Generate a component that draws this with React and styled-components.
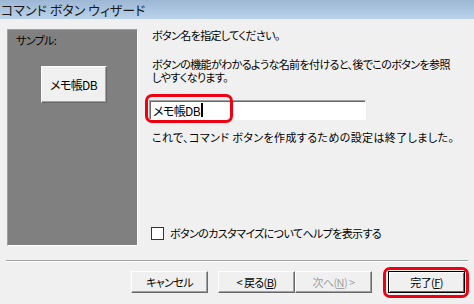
import React from 'react';
import styled, { createGlobalStyle } from 'styled-components';

const GlobalStyle = createGlobalStyle`
  html, body {
    margin: 0;
    padding: 0;
    background: #f0f0f0;
  }
  body {
    font-family: "Noto Sans CJK JP", "Liberation Sans", sans-serif;
    font-size: 11px;
    letter-spacing: -0.6px;
    color: #000;
    font-feature-settings: "palt";
  }
`;

const Window = styled.div`
  width: 474px;
  height: 304px;
  background: #f0f0f0;
  display: flex;
  flex-direction: column;
  overflow: hidden;
`;

const TitleBar = styled.div`
  height: 19px;
  background: linear-gradient(to bottom, #9cb7d5, #bad2ea);
  display: flex;
  align-items: center;
  padding-left: 1px;
  font-size: 13px;
  letter-spacing: 0;
  color: #1a1a1a;
`;

const Body = styled.div`
  display: flex;
  padding: 10px 0 0 7px;
  height: 217px;
`;

const SamplePanel = styled.div`
  width: 129px;
  height: 215px;
  background: #808080;
  border: 1px solid;
  border-color: #a0a0a0 #fff #fff #a0a0a0;
  display: flex;
  flex-direction: column;
  align-items: center;
`;

const SampleLabel = styled.div`
  align-self: flex-start;
  margin: 4px 0 0 8px;
  line-height: 13px;
`;

const SampleButton = styled.div`
  margin-top: 19px;
  margin-left: 2px;
  width: 64px;
  height: 35px;
  background: #f0f0f0;
  border: 1px solid;
  border-color: #fff #696969 #696969 #fff;
  box-shadow: inset -1px -1px 0 #a0a0a0;
  display: flex;
  align-items: center;
  justify-content: center;
  font-size: 12px;
`;

const Content = styled.div`
  flex: 1;
  display: flex;
  flex-direction: column;
  padding-left: 11px;
  padding-right: 8px;
`;

const Text = styled.p`
  margin: ${p => p.$mt || 0}px 0 0 3px;
  line-height: 13px;
  white-space: nowrap;
  letter-spacing: ${p => (p.$wide ? '0.4px' : 'inherit')};
`;

const InputWrap = styled.div`
  position: relative;
  margin-top: 16px;
  width: 217px;
  height: 20px;
`;

const TextInput = styled.div`
  box-sizing: border-box;
  width: 100%;
  height: 100%;
  background: #fff;
  border: 1px solid;
  border-color: #a0a0a0 #fff #fff #a0a0a0;
  box-shadow: inset 1px 1px 0 #696969;
  display: flex;
  align-items: center;
  padding-left: 3px;
  line-height: 13px;
  font-size: 12px;
`;

const Caret = styled.span`
  display: inline-block;
  width: 2px;
  height: 14px;
  background: #000;
  margin-left: 1px;
`;

const Highlight = styled.div`
  position: absolute;
  left: ${p => p.$l}px;
  top: ${p => p.$t}px;
  width: ${p => p.$w}px;
  height: ${p => p.$h}px;
  box-sizing: border-box;
  border: 3px solid #ee0010;
  border-radius: 7px;
  pointer-events: none;
`;

const CheckRow = styled.label`
  margin-top: auto;
  margin-bottom: 6px;
  margin-left: 2px;
  display: flex;
  align-items: center;
  gap: 6px;
  line-height: 13px;
`;

const CheckBox = styled.span`
  box-sizing: border-box;
  width: 13px;
  height: 13px;
  background: #fff;
  border: 1px solid #333;
`;

const Separator = styled.div`
  margin: 14px 6px 0 6px;
  height: 1px;
  background: #a0a0a0;
  border-bottom: 1px solid #fff;
`;

const ButtonRow = styled.div`
  display: flex;
  padding: 9px 0 0 131px;
`;

const Button = styled.div`
  position: relative;
  box-sizing: border-box;
  width: 77px;
  height: 22px;
  background: #f0f0f0;
  border: 1px solid;
  border-color: ${p => (p.$default ? '#000' : '#fff #696969 #696969 #fff')};
  box-shadow: ${p =>
    p.$default
      ? 'inset 1px 1px 0 #fff, inset -1px -1px 0 #696969'
      : 'inset -1px -1px 0 #a0a0a0'};
  display: flex;
  align-items: center;
  justify-content: center;
  margin-left: ${p => p.$gap || 0}px;
  color: ${p => (p.$disabled ? '#a0a0a0' : '#000')};
  line-height: 13px;
`;

const Key = styled.span`
  text-decoration: underline;
`;

export default function App() {
  return (
    <>
      <GlobalStyle />
      <Window>
        <TitleBar>コマンド ボタン ウィザード</TitleBar>
        <Body>
          <SamplePanel>
            <SampleLabel>サンプル:</SampleLabel>
            <SampleButton>メモ帳DB</SampleButton>
          </SamplePanel>
          <Content>
            <Text>ボタン名を指定してください。</Text>
            <Text $mt={16}>
              ボタンの機能がわかるような名前を付けると、後でこのボタンを参照
              <br />
              しやすくなります。
            </Text>
            <InputWrap>
              <TextInput>
                メモ帳DB<Caret />
              </TextInput>
              <Highlight $l={-4} $t={-6} $w={88} $h={29} />
            </InputWrap>
            <Text $mt={11} $wide>
              これで、コマンド ボタンを作成するための設定は終了しました。
            </Text>
            <CheckRow>
              <CheckBox />
              ボタンのカスタマイズについてヘルプを表示する
            </CheckRow>
          </Content>
        </Body>
        <Separator />
        <ButtonRow>
          <Button>キャンセル</Button>
          <Button $gap={10}>
            &lt; 戻る(<Key>B</Key>)
          </Button>
          <Button $disabled>
            次へ(<Key>N</Key>) &gt;
          </Button>
          <Button $gap={16} $default>
            完了(<Key>F</Key>)
            <Highlight $l={-6} $t={-5} $w={86} $h={31} />
          </Button>
        </ButtonRow>
      </Window>
    </>
  );
}
